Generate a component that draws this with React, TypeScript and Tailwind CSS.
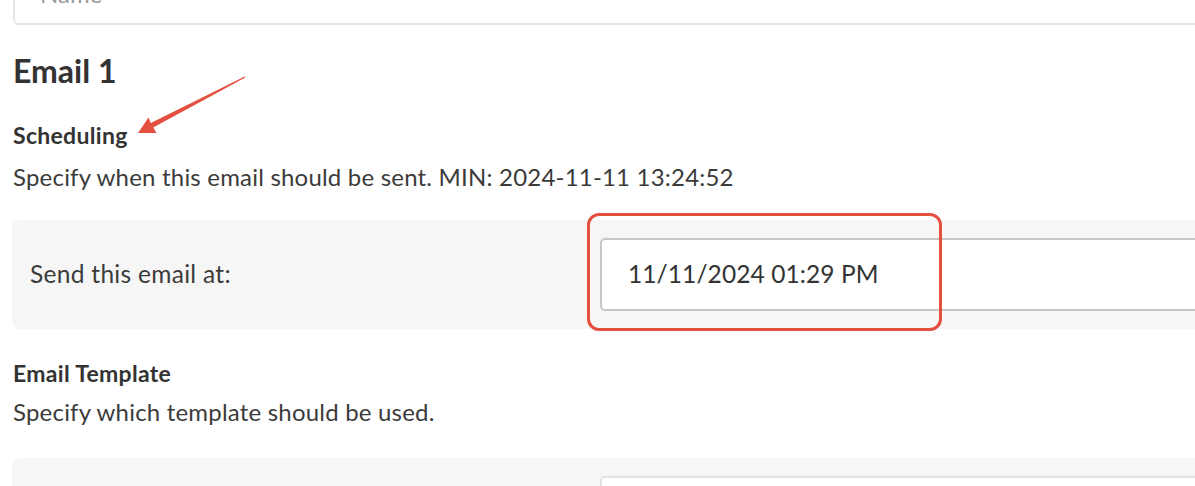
const ink = "text-[#333333]";

function SectionLabel({ children, className = "" }: { children: string; className?: string }) {
  return (
    <h3 className={`text-[23px] leading-none font-bold tracking-[0.3px] ${ink} ${className}`}>
      {children}
    </h3>
  );
}

function Help({ children, className = "" }: { children: string; className?: string }) {
  return (
    <p className={`text-[24px] leading-none tracking-[0.2px] text-[#3b3b3b] ${className}`}>{children}</p>
  );
}

function FieldRow({
  label,
  value,
  focused = false,
  className = "",
}: {
  label?: string;
  value?: string;
  focused?: boolean;
  className?: string;
}) {
  return (
    <div className={`flex items-center rounded-[8px] bg-[#f6f6f6] pt-[18px] pb-[18px] pl-[18px] ${className}`}>
      <div className="w-[570px] shrink-0 text-[24.5px] leading-none tracking-[0.3px] text-[#3b3b3b]">
        {label}
      </div>
      <div
        className={`flex h-[73px] flex-1 items-center rounded-[5px] border-2 bg-white pl-[26px] text-[24.5px] leading-none tracking-[0.1px] ${ink} ${
          focused ? "border-[#c6c6c6]" : "border-[#e2e2e2]"
        }`}
      >
        {value}
      </div>
    </div>
  );
}

export default function App() {
  return (
    <div className="relative h-[486px] w-[1195px] overflow-hidden bg-white [font-family:Lato,sans-serif]">
      <div className="w-[1400px] pl-[13px]">
        <div className="-mt-[48px] h-[73px] rounded-[6px] border-2 border-[#e4e4e4] bg-white pt-[28px] pl-[25px] text-[24px] leading-none text-[#9a9a9a]">
          Name
        </div>

        <h2 className={`mt-[30px] text-[32px] leading-none font-bold ${ink}`}>Email 1</h2>

        <SectionLabel className="mt-[37px]">Scheduling</SectionLabel>
        <Help className="mt-[18px]">Specify when this email should be sent. MIN: 2024-11-11 13:24:52</Help>

        <FieldRow
          className="mt-[31px] -ml-px"
          label="Send this email at:"
          value="11/11/2024 01:29 PM"
          focused
        />

        <SectionLabel className="mt-[33px]">Email Template</SectionLabel>
        <Help className="mt-[15px]">Specify which template should be used.</Help>

        <FieldRow className="mt-[34px] -ml-px" />
      </div>

      {/* annotation: red highlight box */}
      <div className="pointer-events-none absolute top-[213px] left-[587px] h-[118px] w-[355px] rounded-[12px] border-[3px] border-[#e4503f]" />

      {/* annotation: red arrow */}
      <svg className="pointer-events-none absolute top-0 left-0" width="1195" height="486">
        <polygon
          fill="#e4503f"
          points="138,133 156.5,133 153.2,127.4 245.3,77.5 244.7,76.5 150.8,123.0 148.5,117.5"
        />
      </svg>
    </div>
  );
}
